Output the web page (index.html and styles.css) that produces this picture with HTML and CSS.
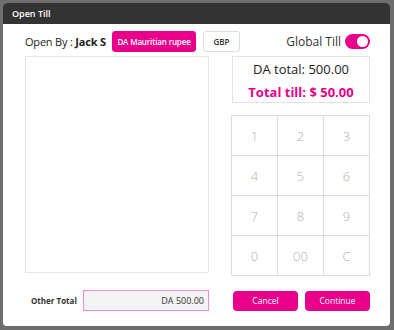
FILE: index.html
```html
<!DOCTYPE html>
<html lang="en">
<head>
    <meta charset="UTF-8">
    <meta name="viewport" content="width=device-width, initial-scale=1.0">
    <title>Open Till</title>
    <link rel="stylesheet" href="styles.css">
</head>
<body>
    <div class="modal">
        <div class="modal-title">Open Till</div>

        <div class="modal-body">
            <div class="header-row">
                <div class="open-by">Open By : <b>Jack S</b></div>
                <button class="currency active">DA Mauritian rupee</button>
                <button class="currency">GBP</button>
                <div class="global-till">
                    <span>Global Till</span>
                    <span class="toggle on"><span class="knob"></span></span>
                </div>
            </div>

            <div class="main">
                <div class="denominations"></div>

                <div class="side">
                    <div class="totals">
                        <div class="da-total">DA total: 500.00</div>
                        <div class="till-total">Total till: $ 50.00</div>
                    </div>

                    <div class="keypad">
                        <button>1</button>
                        <button>2</button>
                        <button>3</button>
                        <button>4</button>
                        <button>5</button>
                        <button>6</button>
                        <button>7</button>
                        <button>8</button>
                        <button>9</button>
                        <button>0</button>
                        <button>00</button>
                        <button>C</button>
                    </div>
                </div>
            </div>

            <div class="footer-row">
                <div class="other-total">
                    <label>Other Total</label>
                    <div class="other-input">DA 500.00</div>
                </div>
                <div class="actions">
                    <button class="btn">Cancel</button>
                    <button class="btn">Continue</button>
                </div>
            </div>
        </div>
    </div>
</body>
</html>
```

FILE: styles.css
```css
* {
    margin: 0;
    padding: 0;
    box-sizing: border-box;
}

body {
    background: #6e6e6e;
    font-family: 'Open Sans', 'Noto Sans', sans-serif;
    color: #222;
    padding: 3px;
}

button {
    font-family: inherit;
    cursor: pointer;
    outline: none;
}

.modal {
    width: 387px;
    height: 323px;
    background: #fff;
    border-radius: 4px;
    overflow: hidden;
}

.modal-title {
    height: 21px;
    background: #333;
    color: #fff;
    font-size: 9px;
    font-weight: 600;
    line-height: 21px;
    padding-left: 9px;
}

.modal-body {
    padding: 7px 20px 0 22px;
}

.header-row {
    display: flex;
    align-items: center;
    height: 21px;
}

.open-by {
    font-size: 11px;
    width: 87px;
    flex-shrink: 0;
    white-space: nowrap;
    letter-spacing: -0.2px;
}

.open-by b {
    font-weight: 700;
}

.currency {
    height: 21px;
    border-radius: 3px;
    border: 1px solid #ddd;
    background: #fff;
    color: #333;
    font-size: 8px;
    font-weight: 600;
    margin-right: 7px;
    white-space: nowrap;
    flex-shrink: 0;
}

.currency.active {
    width: 84px;
    background: #e8008a;
    border-color: #e8008a;
    color: #fff;
    letter-spacing: -0.15px;
}

.currency:not(.active) {
    width: 37px;
}

.global-till {
    margin-left: auto;
    display: flex;
    align-items: center;
    gap: 4px;
    font-size: 12px;
    color: #333;
}

.toggle {
    width: 25px;
    height: 15px;
    border-radius: 8px;
    background: #e8008a;
    position: relative;
}

.toggle .knob {
    position: absolute;
    top: 2px;
    right: 2px;
    width: 11px;
    height: 11px;
    border-radius: 50%;
    background: #fff;
}

.main {
    display: grid;
    grid-template-columns: 184px 138px;
    justify-content: space-between;
    margin-top: 4px;
    height: 218px;
}

.denominations {
    border: 1px solid #e6e6e6;
    height: 217px;
}

.side {
    display: flex;
    flex-direction: column;
    gap: 12px;
}

.totals {
    height: 47px;
    border: 1px solid #e3e3e3;
    text-align: center;
    padding-top: 3px;
}

.da-total {
    font-size: 13px;
    line-height: 19px;
}

.till-total {
    font-size: 13px;
    font-weight: 700;
    color: #e8008a;
    line-height: 26px;
}

.keypad {
    display: grid;
    grid-template-columns: repeat(3, 1fr);
    grid-auto-rows: 40px;
    border-top: 1px solid #ddd;
    border-left: 1px solid #ddd;
    margin-left: -1px;
}

.keypad button {
    background: #fff;
    border: none;
    border-right: 1px solid #ddd;
    border-bottom: 1px solid #ddd;
    font-size: 13px;
    font-weight: 300;
    color: #b0b0b0;
}

.footer-row {
    display: flex;
    justify-content: space-between;
    align-items: center;
    margin-top: 16px;
}

.other-total {
    display: flex;
    align-items: center;
}

.other-total label {
    font-size: 8px;
    font-weight: 700;
    color: #333;
    padding-left: 6px;
    width: 58px;
}

.other-input {
    width: 126px;
    height: 21px;
    background: #f4f4f4;
    border: 1px solid #f08ccc;
    font-size: 9px;
    line-height: 19px;
    text-align: right;
    padding-right: 4px;
    color: #333;
}

.actions {
    display: flex;
    gap: 7px;
}

.btn {
    width: 65px;
    height: 20px;
    background: #e8008a;
    color: #fff;
    border: none;
    border-radius: 4px;
    font-size: 8.5px;
}
```
